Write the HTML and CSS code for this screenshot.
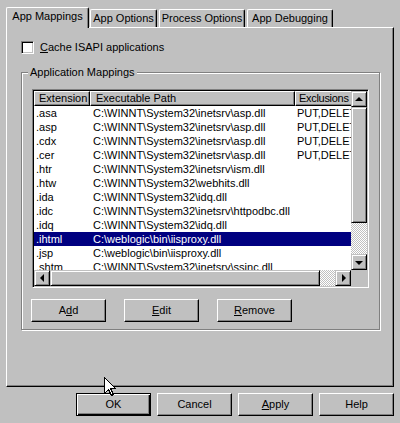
FILE: index.html
```html
<!DOCTYPE html>
<html>
<head>
<meta charset="utf-8">
<title>App Mappings</title>
<link rel="stylesheet" href="styles.css">
</head>
<body>
<div class="dialog">
  <div class="tabs">
    <div class="tab active t1">App Mappings</div>
    <div class="tab t2">App Options</div>
    <div class="tab t3">Process Options</div>
    <div class="tab t4">App Debugging</div>
  </div>
  <div class="panel">
    <div class="check-row">
      <span class="checkbox"></span>
      <span class="check-label"><u>C</u>ache ISAPI applications</span>
    </div>
    <fieldset class="group">
      <legend>Application Mappings</legend>
      <div class="listview">
        <div class="lv-body">
          <div class="lv-header">
            <div class="hcell h1">Extension</div>
            <div class="hcell h2">Executable Path</div>
            <div class="hcell h3">Exclusions</div>
          </div>
          <div class="row"><span class="c1">.asa</span><span class="c2">C:\WINNT\System32\inetsrv\asp.dll</span><span class="c3">PUT,DELETE</span></div>
          <div class="row"><span class="c1">.asp</span><span class="c2">C:\WINNT\System32\inetsrv\asp.dll</span><span class="c3">PUT,DELETE</span></div>
          <div class="row"><span class="c1">.cdx</span><span class="c2">C:\WINNT\System32\inetsrv\asp.dll</span><span class="c3">PUT,DELETE</span></div>
          <div class="row"><span class="c1">.cer</span><span class="c2">C:\WINNT\System32\inetsrv\asp.dll</span><span class="c3">PUT,DELETE</span></div>
          <div class="row"><span class="c1">.htr</span><span class="c2">C:\WINNT\System32\inetsrv\ism.dll</span><span class="c3"></span></div>
          <div class="row"><span class="c1">.htw</span><span class="c2">C:\WINNT\System32\webhits.dll</span><span class="c3"></span></div>
          <div class="row"><span class="c1">.ida</span><span class="c2">C:\WINNT\System32\idq.dll</span><span class="c3"></span></div>
          <div class="row"><span class="c1">.idc</span><span class="c2">C:\WINNT\System32\inetsrv\httpodbc.dll</span><span class="c3"></span></div>
          <div class="row"><span class="c1">.idq</span><span class="c2">C:\WINNT\System32\idq.dll</span><span class="c3"></span></div>
          <div class="row sel"><span class="c1">.ihtml</span><span class="c2">C:\weblogic\bin\iisproxy.dll</span><span class="c3"></span></div>
          <div class="row"><span class="c1">.jsp</span><span class="c2">C:\weblogic\bin\iisproxy.dll</span><span class="c3"></span></div>
          <div class="row"><span class="c1">.shtm</span><span class="c2">C:\WINNT\System32\inetsrv\ssinc.dll</span><span class="c3"></span></div>
        </div>
        <div class="vscroll">
          <div class="sb-btn"><span class="arr arr-up"></span></div>
          <div class="sb-vthumb"></div>
          <div class="sb-track"></div>
          <div class="sb-btn"><span class="arr arr-down"></span></div>
        </div>
        <div class="hscroll">
          <div class="sb-btn"><span class="arr arr-left"></span></div>
          <div class="sb-hthumb"></div>
          <div class="sb-track"></div>
          <div class="sb-btn"><span class="arr arr-right"></span></div>
        </div>
        <div class="corner"></div>
      </div>
      <div class="group-buttons">
        <button class="btn">A<u>d</u>d</button>
        <button class="btn"><u>E</u>dit</button>
        <button class="btn"><u>R</u>emove</button>
      </div>
    </fieldset>
  </div>
  <div class="footer">
    <button class="btn default">OK</button>
    <button class="btn">Cancel</button>
    <button class="btn"><u>A</u>pply</button>
    <button class="btn">Help</button>
  </div>
</div>
<svg class="cursor" width="13" height="20" viewBox="0 0 13 20" xmlns="http://www.w3.org/2000/svg">
  <path d="M0.5 0.5 L0.5 16.5 L4.5 12.5 L7.5 18.5 L9.5 17.5 L6.5 11.5 L11.5 11.5 Z" fill="#fff" stroke="#000" stroke-width="1" shape-rendering="crispEdges"/>
</svg>
</body>
</html>
```
FILE: styles.css
```css
* { box-sizing: border-box; }
html, body { margin: 0; padding: 0; }
body {
  width: 400px;
  height: 423px;
  background: #c0c0c0;
  font-family: "Liberation Sans", Arial, sans-serif;
  font-size: 11px;
  color: #000;
  overflow: hidden;
  position: relative;
}
.dialog { padding: 7px 6px 0 6px; }

/* Tabs */
.tabs { display: flex; align-items: flex-end; height: 20px; }
.tab {
  height: 18px;
  border-top: 1px solid #fff;
  border-left: 1px solid #fff;
  border-right: 1px solid #000;
  border-radius: 2px 2px 0 0;
  box-shadow: inset -1px 0 0 #808080;
  background: #c0c0c0;
  text-align: center;
  line-height: 13px;
  padding-top: 2px;
  white-space: nowrap;
}
.tab.active { height: 21px; margin-bottom: -1px; position: relative; z-index: 1; }
.t1 { width: 83px; }
.t2 { width: 67px; margin-left: 1px; }
.t3 { width: 86px; margin-left: 2px; }
.t4 { width: 86px; margin-left: 2px; }

/* Panel */
.panel {
  height: 360px;
  border: 1px solid;
  border-color: #fff #000 #000 #fff;
  box-shadow: inset -1px -1px 0 #808080;
  padding: 13px 0 0 14px;
}
.check-row { display: flex; align-items: center; height: 13px; gap: 6px; }
.checkbox {
  width: 13px; height: 13px;
  border: 1px solid;
  border-color: #808080 #fff #fff #808080;
  box-shadow: inset 1px 1px 0 #000, inset -1px -1px 0 #c0c0c0;
  background: #fff;
  flex: none;
}
.check-label { line-height: 13px; }

/* Group box */
.group {
  margin: 12px 0 0 0;
  padding: 10px 10px 7px 10px;
  width: 359px;
  min-width: 0;
  border: 1px solid #808080;
  box-shadow: inset 1px 1px 0 #fff, 1px 1px 0 #fff;
}
.group legend {
  padding: 0 2px;
  margin-left: -4px;
  line-height: 13px;
  background: #c0c0c0;
}

/* List view */
.listview {
  width: 337px;
  height: 199px;
  border: 1px solid;
  border-color: #808080 #fff #fff #808080;
  box-shadow: inset 1px 1px 0 #000, inset -1px -1px 0 #c0c0c0;
  padding: 1px;
  display: grid;
  grid-template-columns: 1fr 16px;
  grid-template-rows: 1fr 16px;
  background: #fff;
}
.lv-body { overflow: hidden; background: #fff; min-width: 0; min-height: 0; }
.lv-header { display: grid; grid-template-columns: 56px 205px 80px; height: 15px; }
.hcell {
  border: 1px solid;
  border-color: #fff #000 #000 #fff;
  box-shadow: inset -1px -1px 0 #808080;
  background: #c0c0c0;
  line-height: 13px;
  white-space: nowrap;
  overflow: hidden;
  padding-left: 5px;
}
.h1 { padding-left: 4px; }
.h3 { padding-left: 3px; letter-spacing: -0.3px; }
.row {
  display: grid;
  grid-template-columns: 56px 205px 80px;
  height: 14px;
  line-height: 14px;
  white-space: nowrap;
}
.row span { overflow: hidden; }
.c1 { padding-left: 2px; }
.c2 { padding-left: 3px; }
.c3 { padding-left: 2px; }
.row.sel { background: #000080; color: #fff; }

/* Scrollbars */
.vscroll { display: flex; flex-direction: column; min-height: 0; }
.hscroll { display: flex; min-width: 0; }
.sb-btn, .sb-vthumb, .sb-hthumb {
  border: 1px solid;
  border-color: #c0c0c0 #000 #000 #c0c0c0;
  box-shadow: inset 1px 1px 0 #fff, inset -1px -1px 0 #808080;
  background: #c0c0c0;
  flex: none;
}
.sb-btn { width: 16px; height: 16px; display: flex; align-items: center; justify-content: center; }
.sb-vthumb { height: 116px; }
.sb-hthumb { width: 270px; }
.sb-track {
  flex: 1;
  background-image: repeating-conic-gradient(#fff 0 25%, #c0c0c0 0 50%);
  background-size: 2px 2px;
}
.corner { background: #c0c0c0; }
.arr { width: 0; height: 0; display: block; }
.arr-up { border-left: 4px solid transparent; border-right: 4px solid transparent; border-bottom: 4px solid #000; margin-top: -1px; }
.arr-down { border-left: 4px solid transparent; border-right: 4px solid transparent; border-top: 4px solid #000; margin-top: 1px; }
.arr-left { border-top: 4px solid transparent; border-bottom: 4px solid transparent; border-right: 4px solid #000; margin-left: -1px; }
.arr-right { border-top: 4px solid transparent; border-bottom: 4px solid transparent; border-left: 4px solid #000; margin-left: 1px; }

/* Buttons */
.group-buttons { display: flex; gap: 18px; margin-top: 11px; margin-left: -1px; }
.btn {
  width: 75px;
  height: 23px;
  margin: 0;
  padding: 0;
  border: 1px solid;
  border-color: #fff #000 #000 #fff;
  box-shadow: inset -1px -1px 0 #808080;
  background: #c0c0c0;
  font: inherit;
  color: #000;
  text-align: center;
  line-height: 19px;
}
.btn.default {
  border-color: #000;
  box-shadow: inset 1px 1px 0 #fff, inset -1px -1px 0 #000, inset -2px -2px 0 #808080;
}
.footer { display: flex; justify-content: flex-end; gap: 6px; margin-top: 6px; }

.cursor { position: absolute; left: 104px; top: 377px; z-index: 5; }
```
